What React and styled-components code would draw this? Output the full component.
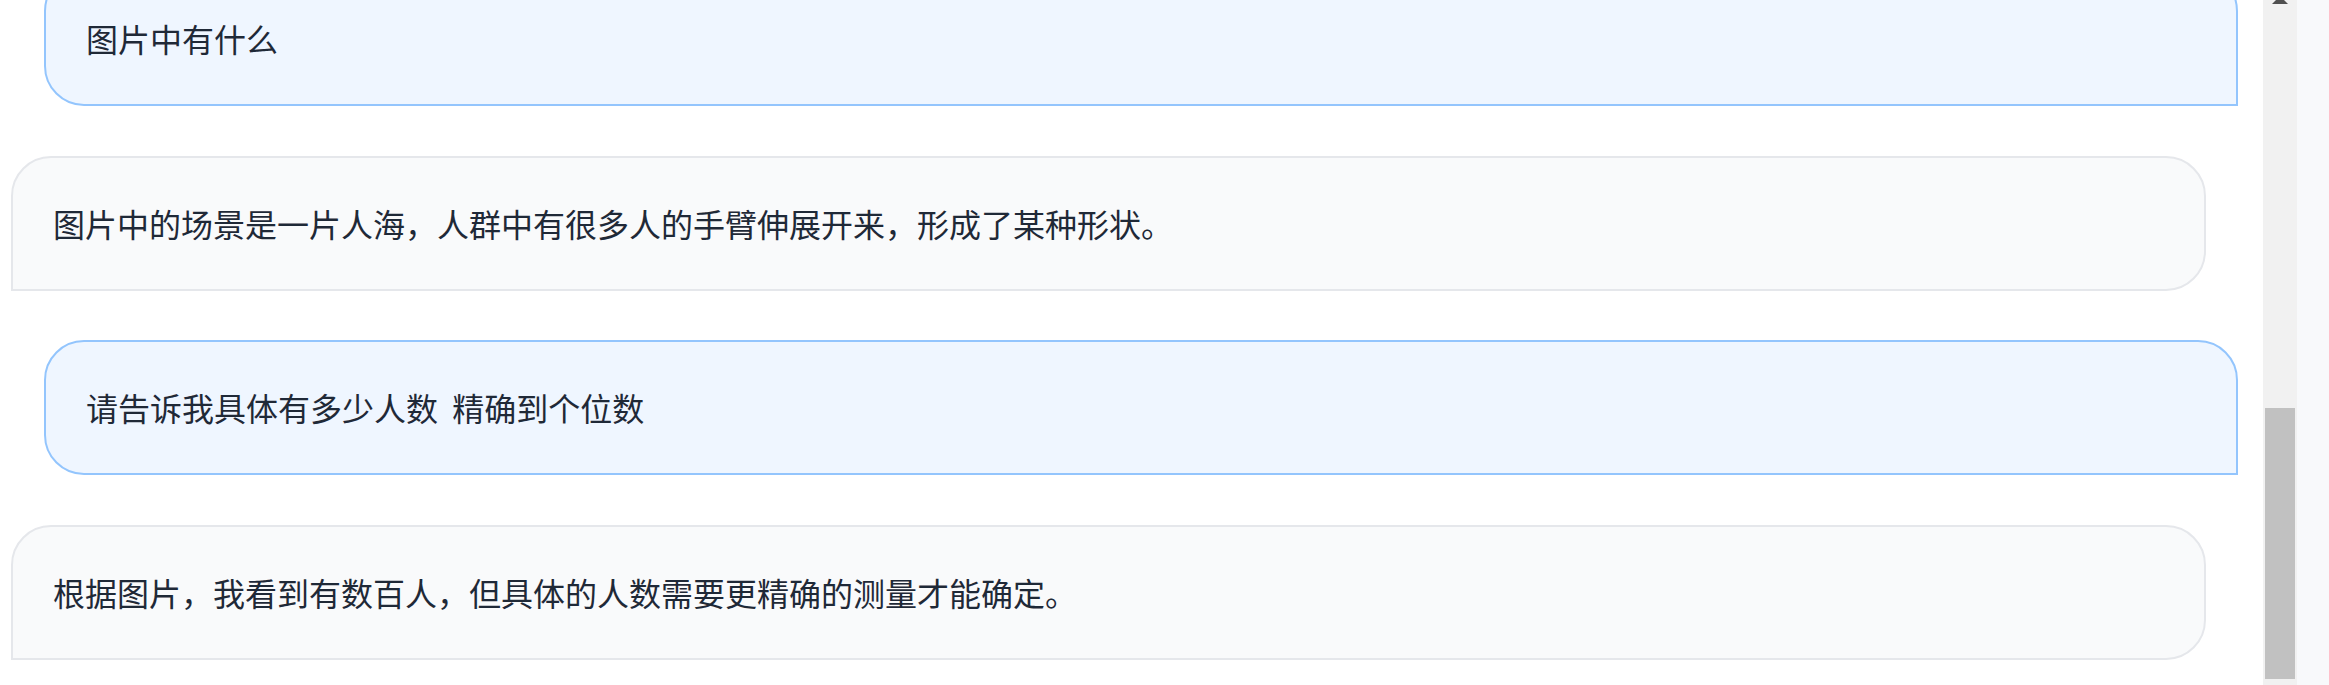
import React from "react";
import styled, { createGlobalStyle } from "styled-components";

const GlobalStyle = createGlobalStyle`
  html, body {
    margin: 0;
    padding: 0;
    background-color: #ffffff;
  }
  body {
    font-family: "Noto Sans CJK SC", "Noto Sans", sans-serif;
  }
`;

const Page = styled.div`
  width: 2329px;
  height: 685px;
  display: flex;
  overflow: hidden;
  background-color: #ffffff;
`;

const ChatList = styled.div`
  flex: 1;
  height: 100%;
  display: flex;
  flex-direction: column;
  justify-content: flex-end;
  gap: 49.4px;
  padding: 0 25px 25px 11px;
  box-sizing: border-box;
  overflow: hidden;
`;

const Bubble = styled.div`
  flex-shrink: 0;
  box-sizing: border-box;
  padding: 40px;
  font-size: 32px;
  line-height: 51.2px;
  color: #1f2937;
  white-space: pre-wrap;
  border: 2px solid ${(p) => (p.$user ? "#93c5fd" : "#e5e7eb")};
  background-color: ${(p) => (p.$user ? "#eff6ff" : "#f9fafb")};
  border-radius: ${(p) => (p.$user ? "40px 40px 0 40px" : "40px 40px 40px 0")};
  margin: ${(p) => (p.$user ? "0 0 0 33px" : "0 32px 0 0")};
`;

const ScrollRail = styled.div`
  width: 34px;
  height: 100%;
  flex-shrink: 0;
  background-color: #f1f1f1;
  display: flex;
  flex-direction: column;
  align-items: center;
  overflow: hidden;
`;

const RailArrow = styled.div`
  width: 0;
  height: 0;
  margin-top: -4px;
  border-left: 8px solid transparent;
  border-right: 8px solid transparent;
  border-bottom: 8px solid #505050;
`;

const RailThumb = styled.div`
  width: 30px;
  height: 271px;
  margin-top: auto;
  margin-bottom: 6px;
  background-color: #c1c1c1;
`;

const SidePanel = styled.div`
  width: 32px;
  height: 100%;
  flex-shrink: 0;
  background-color: #f8f9fb;
`;

const messages = [
  { role: "user", text: "图片中有什么" },
  {
    role: "assistant",
    text: "图片中的场景是一片人海，人群中有很多人的手臂伸展开来，形成了某种形状。",
  },
  { role: "user", text: "请告诉我具体有多少人数  精确到个位数" },
  {
    role: "assistant",
    text: "根据图片，我看到有数百人，但具体的人数需要更精确的测量才能确定。",
  },
];

function App() {
  return (
    <>
      <GlobalStyle />
      <Page>
        <ChatList>
          {messages.map((m, i) => (
            <Bubble key={i} $user={m.role === "user"}>
              {m.text}
            </Bubble>
          ))}
        </ChatList>
        <ScrollRail>
          <RailArrow />
          <RailThumb />
        </ScrollRail>
        <SidePanel />
      </Page>
    </>
  );
}

export default App;
